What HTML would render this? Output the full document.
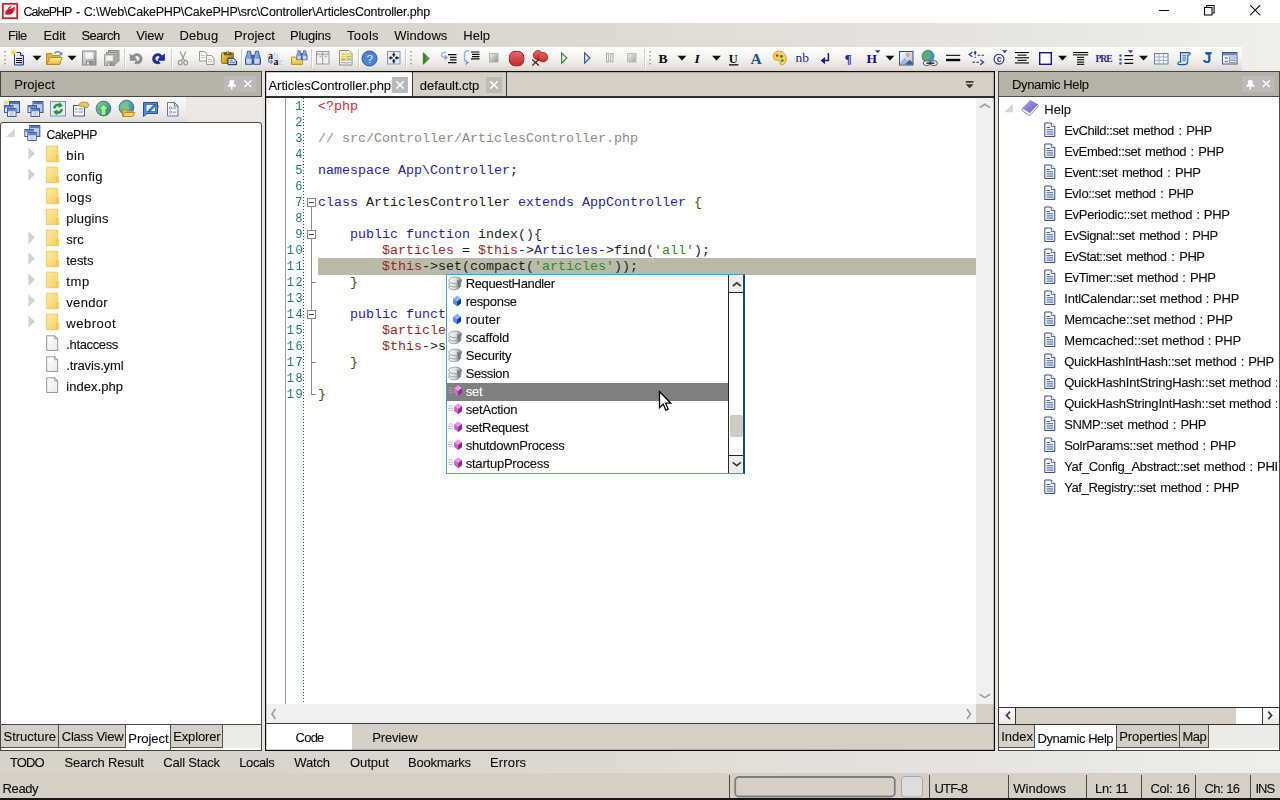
<!DOCTYPE html>
<html lang="en">
<head>
<meta charset="utf-8">
<title>CakePHP - C:\Web\CakePHP\CakePHP\src\Controller\ArticlesController.php</title>
<style>
*{box-sizing:border-box;margin:0;padding:0}
html,body{width:1280px;height:800px;overflow:hidden;background:#d4d0c8}
body{position:relative;font-family:"Liberation Sans",Arial,sans-serif;font-size:13px;color:#1c1c1c;line-height:16px}
.a,.t{position:absolute}
.t{white-space:nowrap;line-height:16px;height:16px;color:#0c0c0c;-webkit-text-stroke:.1px currentColor}
svg{position:absolute;overflow:visible;left:0;top:0}
/* window chrome */
#title{left:0;top:0;width:1280px;height:23px;background:#fff}
#menu{left:0;top:23px;width:1280px;height:24px;background:linear-gradient(90deg,#d5d2ca 0%,#dad7d1 40%,#e5e4e0 75%,#eeeeed 100%)}
#tools{left:0;top:47px;width:1280px;height:24px;background:linear-gradient(90deg,#d5d2ca 0%,#dad7d1 40%,#e5e4e0 75%,#eeeeed 100%)}
.tb{position:absolute;top:0;height:24px;background:linear-gradient(180deg,#fdfdfc 0%,#f4f3f1 45%,#e6e4e0 80%,#d9d6d0 100%)}
.sep{position:absolute;top:2px;width:2px;height:20px;background:linear-gradient(90deg,#c4c1ba 0,#c4c1ba 1px,#fff 1px,#fff 2px)}
/* panels */
.hdr{background:#b5b3a7;border:1px solid #46453f}
.pinbox{background:#babab8}
.ptb{background:#e9e8e5}
.ptbl{background:linear-gradient(180deg,#fafaf9 0%,#f0efed 50%,#e0deda 100%)}
.tree{background:#fff;border:1px solid #4a4944;overflow:hidden}
.ptabs{background:linear-gradient(180deg,#ebebea 0,#ebebea 23px,#fbfbfb 23px,#fbfbfb 100%);border:1px solid #46453f;border-top:none}
.ptab{top:0;height:23px;background:#d4d0c8;border-right:1px solid #55544f;border-bottom:1px solid #55544f}
.ptab.on{background:#fff;height:25px;border-bottom:none}
.rt{clip-path:none}
#txt{position:absolute;left:0;top:0;width:1277px;height:800px;overflow:hidden;will-change:transform}
/* editor */
.lnn{-webkit-text-stroke:0}
.code{font-family:"Liberation Mono","Courier New",monospace;font-size:13.33px;transform:scaleY(.9);transform-origin:0 11px;line-height:16px;white-space:pre;position:absolute;height:16px;left:318px;color:#1c1c1c}
.k{color:#2626a6}.v{color:#982828}.s{color:#2c8c2c}.c{color:#8c8c8c}.p{color:#c83232}.y{color:#4a4a10}
.fb{position:absolute;left:307px;width:9px;height:9px;border:1px solid #8a8a8a;background:#fff}
.fb:after{content:"";position:absolute;left:1px;top:3px;width:5px;height:1px;background:#444}
.ft{position:absolute;left:311px;width:5px;height:1px;background:#8a8a8a}
</style>
</head>
<body>
<!-- TITLE BAR -->
<div id="title" class="a"></div>
<!-- MENU BAR -->
<div id="menu" class="a"></div>
<!-- TOOLBARS -->
<div id="tools" class="a">
  <div class="tb" style="left:0;width:1242px"></div>
</div>
<div class="a" id="gapl" style="left:262px;top:72px;width:3px;height:679px;background:#e4e3df"></div>
<div class="a" id="gapr" style="left:995px;top:72px;width:3px;height:679px;background:#e4e3df"></div>
<!-- TOOLBAR ICONS -->
<svg width="1280" height="72" viewBox="0 0 1280 72">
<defs>
<linearGradient id="gy" x1="0" y1="0" x2="0" y2="1"><stop offset="0" stop-color="#fff0a8"/><stop offset="1" stop-color="#eeb630"/></linearGradient>
<linearGradient id="gb" x1="0" y1="0" x2="1" y2="1"><stop offset="0" stop-color="#ffffff"/><stop offset="1" stop-color="#a9bde6"/></linearGradient>
<linearGradient id="gg" x1="0" y1="0" x2="1" y2="1"><stop offset="0" stop-color="#f2f2f2"/><stop offset="1" stop-color="#8e8e8e"/></linearGradient>
<linearGradient id="gr" x1="0" y1="0" x2="0" y2="1"><stop offset="0" stop-color="#e26a6a"/><stop offset="1" stop-color="#c02a2a"/></linearGradient>
<linearGradient id="gbl" x1="0" y1="0" x2="1" y2="1"><stop offset="0" stop-color="#b8d0f4"/><stop offset="1" stop-color="#3c68b4"/></linearGradient>
<linearGradient id="ggr" x1="0" y1="0" x2="1" y2="0"><stop offset="0" stop-color="#2c6e1c"/><stop offset="1" stop-color="#6cb848"/></linearGradient>
<linearGradient id="gpa" x1="0" y1="0" x2="1" y2=".6"><stop offset="0" stop-color="#f6dc4c"/><stop offset=".45" stop-color="#e0b22c"/><stop offset="1" stop-color="#8c6a1e"/></linearGradient>
</defs>
<g fill="#80808e"><rect x="4.4" y="51.3" width="1.3" height="1.3"/><rect x="4.4" y="55.2" width="1.3" height="1.3"/><rect x="4.4" y="59.1" width="1.3" height="1.3"/><rect x="4.4" y="63" width="1.3" height="1.3"/></g>
<g fill="#80808e"><rect x="410.4" y="51.3" width="1.3" height="1.3"/><rect x="410.4" y="55.2" width="1.3" height="1.3"/><rect x="410.4" y="59.1" width="1.3" height="1.3"/><rect x="410.4" y="63" width="1.3" height="1.3"/></g>
<g fill="#80808e"><rect x="649.4" y="51.3" width="1.3" height="1.3"/><rect x="649.4" y="55.2" width="1.3" height="1.3"/><rect x="649.4" y="59.1" width="1.3" height="1.3"/><rect x="649.4" y="63" width="1.3" height="1.3"/></g>
<rect x="124" y="49" width="1" height="19" fill="#d0cec8"/><rect x="125" y="49" width="1" height="19" fill="#fdfdfd"/>
<rect x="171" y="49" width="1" height="19" fill="#d0cec8"/><rect x="172" y="49" width="1" height="19" fill="#fdfdfd"/>
<rect x="241" y="49" width="1" height="19" fill="#d0cec8"/><rect x="242" y="49" width="1" height="19" fill="#fdfdfd"/>
<rect x="311" y="49" width="1" height="19" fill="#d0cec8"/><rect x="312" y="49" width="1" height="19" fill="#fdfdfd"/>
<rect x="358" y="49" width="1" height="19" fill="#d0cec8"/><rect x="359" y="49" width="1" height="19" fill="#fdfdfd"/>
<rect x="405" y="49" width="1" height="19" fill="#d0cec8"/><rect x="406" y="49" width="1" height="19" fill="#fdfdfd"/>
<rect x="644" y="49" width="1" height="19" fill="#d0cec8"/><rect x="645" y="49" width="1" height="19" fill="#fdfdfd"/>
<path d="M32.5 55.8h9l-4.5 4.6z" fill="#0a0a0a"/>
<path d="M67.5 55.8h9l-4.5 4.6z" fill="#0a0a0a"/>
<path d="M677.5 55.8h9l-4.5 4.6z" fill="#0a0a0a"/>
<path d="M712 55.8h9l-4.5 4.6z" fill="#0a0a0a"/>
<path d="M885.5 55.8h9l-4.5 4.6z" fill="#0a0a0a"/>
<path d="M1058 55.8h9l-4.5 4.6z" fill="#0a0a0a"/>
<path d="M1139 55.8h9l-4.5 4.6z" fill="#0a0a0a"/>
<g><path d="M14.5 52.5h6l3 3v9.5h-9z" fill="url(#gb)" stroke="#2c3c7c"/><path d="M20.5 52.5v3h3" fill="#dfe8fa" stroke="#2c3c7c"/><path d="M16 58.5h6M16 60.5h6M16 62.5h6" stroke="#111" stroke-width="1.1"/><path d="M13.5 49.5v6M10.5 52.5h6M11.4 50.4l4.2 4.2M15.6 50.4l-4.2 4.2" stroke="#f2d84a" stroke-width="1.1"/></g>
<g><path d="M46.5 64.5v-11h5l1.5 2h7v9z" fill="#e3b43a" stroke="#b98e22"/><path d="M46.8 64.5l3-7h12.4l-2.7 7z" fill="url(#gy)" stroke="#b98e22"/><path d="M54.5 53.5c2-2.6 5.4-2.6 6.6 0.6" fill="none" stroke="#5c84c6" stroke-width="1.4"/><path d="M62.6 52l-0.6 3.6-3.2-1.4z" fill="#5c84c6"/></g>
<g transform="translate(82 50.5) scale(1)"><rect x=".5" y=".5" width="13.5" height="14" fill="url(#gg)" stroke="#8a8a8a"/><rect x="2.5" y="1.5" width="9" height="7" fill="#f4f4f4" stroke="#b4b4b4" stroke-width=".6"/><rect x="4" y="10.5" width="6.5" height="4" fill="#8c8c8c"/><rect x="5" y="11.5" width="2" height="2.5" fill="#e6e6e6"/></g>
<g><rect x="108.5" y="50.5" width="10.5" height="10.5" fill="#b4b4b4" stroke="#8e8e8e"/><rect x="106.5" y="52.5" width="10.5" height="10.5" fill="#c0c0c0" stroke="#8e8e8e"/></g>
<g transform="translate(104 54.3) scale(0.78)"><rect x=".5" y=".5" width="13.5" height="14" fill="url(#gg)" stroke="#8a8a8a"/><rect x="2.5" y="1.5" width="9" height="7" fill="#f4f4f4" stroke="#b4b4b4" stroke-width=".6"/><rect x="4" y="10.5" width="6.5" height="4" fill="#8c8c8c"/><rect x="5" y="11.5" width="2" height="2.5" fill="#e6e6e6"/></g>
<path d="M132.5 55.6A5.5 5.5 0 1 1 134.2 63.5L135.9 60.8A2.4 2.4 0 1 0 135 57.2L136.8 59V60.7H129.8V53.5Z" fill="#8e8e8e"/>
<path d="M132.5 55.6A5.5 5.5 0 1 1 134.2 63.5L135.9 60.8A2.4 2.4 0 1 0 135 57.2L136.8 59V60.7H129.8V53.5Z" fill="#1d2f9e" transform="translate(294.7 0) scale(-1 1)"/>
<g fill="none" stroke="#9a9a9a" stroke-width="1.2"><path d="M180 51.5l4.6 9.5M186 51.5l-4.6 9.5"/><ellipse cx="180.3" cy="62.6" rx="1.9" ry="2.3"/><ellipse cx="185.7" cy="62.6" rx="1.9" ry="2.3"/></g>
<g stroke="#9a9a9a" fill="#f6f6f6"><path d="M199.5 51.5h5l2.5 2.5v7h-7.5z"/><path d="M206.5 55.5h5l2.5 2.5v6.5h-7.5z"/><path d="M201 55.5h4M201 57.5h4M208 59.5h4M208 61.5h4" stroke="#bcbcbc" stroke-width=".8"/></g>
<g><rect x="221.5" y="52.7" width="12" height="10.8" rx="1" fill="url(#gpa)" stroke="#8a6a1c" stroke-width=".9"/><path d="M224.200 54.800v-1.800h1.600c0.300-1.700 3.500-1.700 3.800 0h1.600v1.800z" fill="#6e5628" stroke="#4e3c1c" stroke-width=".6"/><circle cx="227.700" cy="52.900" r=".8" fill="#f4e8b0"/><path d="M228 58.300h5.600l3 2.700v3.700h-8.600z" fill="url(#gb)" stroke="#1c2448" stroke-width="1"/><path d="M229.500 60.300h3M229.500 62.300h5.500" stroke="#4c68b0" stroke-width=".9"/></g>
<g transform="translate(245 50.8) scale(1)"><path d="M2.5 0.5h3l0.6 3.5 1.4 3.5v6h-7v-6l1.4-3.5z" fill="url(#gbl)" stroke="#2c4c94" stroke-width=".9"/><path d="M10.5 0.5h3l0.6 3.5 1.4 3.5v6h-7v-6l1.4-3.5z" fill="url(#gbl)" stroke="#2c4c94" stroke-width=".9"/><rect x="1.5" y="8" width="5" height="5" fill="#e4eefc" opacity=".75"/><rect x="9.5" y="8" width="5" height="5" fill="#e4eefc" opacity=".75"/><rect x="6.6" y="4" width="2.8" height="3" fill="#3a5aa4"/></g>
<g font-family="'Liberation Serif',serif" font-weight="bold" font-size="10px"><text x="268" y="58.5" fill="#0a0a0a">a</text><text x="273.3" y="58.5" fill="#c0c4cc" font-weight="normal">b</text><text x="273.6" y="65" fill="#0a0a0a">a</text><text x="279" y="65" fill="#b8c4dc" font-weight="normal">c</text></g><path d="M268.6 58.6v3.2h3M270.6 59.8l2 2-2 2" fill="none" stroke="#6a8ed2" stroke-width="1.3"/>
<g><path d="M291.5 64.5v-7.5h3.5l1 1.4h6.5v6.1z" fill="url(#gy)" stroke="#c29420"/></g>
<g transform="translate(296.3 50.3) scale(0.7)"><path d="M2.5 0.5h3l0.6 3.5 1.4 3.5v6h-7v-6l1.4-3.5z" fill="url(#gbl)" stroke="#2c4c94" stroke-width=".9"/><path d="M10.5 0.5h3l0.6 3.5 1.4 3.5v6h-7v-6l1.4-3.5z" fill="url(#gbl)" stroke="#2c4c94" stroke-width=".9"/><rect x="1.5" y="8" width="5" height="5" fill="#e4eefc" opacity=".75"/><rect x="9.5" y="8" width="5" height="5" fill="#e4eefc" opacity=".75"/><rect x="6.6" y="4" width="2.8" height="3" fill="#3a5aa4"/></g>
<g fill="#f2f2f2" stroke="#9a9a9a"><rect x="316.5" y="51.5" width="12.5" height="12.5"/><path d="M322.7 52v12M317 54.2h12" /><path d="M319.5 56.5h2M325 56.5h2" stroke="#b0b0b0" stroke-width="1.6"/></g>
<g><path d="M339.5 50.5h9.5l3 3v11.5h-12.5z" fill="#fafafa" stroke="#8a8a8a"/><rect x="341" y="53" width="4.4" height="1.8" fill="#f0d23c"/><rect x="346.4" y="53" width="4.4" height="1.8" fill="#f0d23c"/><rect x="346.4" y="55.6" width="4.4" height="1.8" fill="#9cc860"/><rect x="341" y="55.6" width="4.4" height="1.8" fill="#f0d23c"/><rect x="341" y="58.2" width="4.4" height="2.6" fill="#eeb01c"/><rect x="346.4" y="58.2" width="4.4" height="2.6" fill="#a4cc6c"/><rect x="341" y="62" width="9.8" height="1.4" fill="#b4b4b4"/><path d="M346 51v13.5" stroke="#c8c8c8" stroke-width=".8"/></g>
<g><circle cx="369.5" cy="58.5" r="7.5" fill="#4b85d6" stroke="#2c569e"/><text x="369.6" y="62.6" text-anchor="middle" font-family="'Liberation Sans',sans-serif" font-size="11.5px" fill="#e8f0fc">?</text></g>
<g><rect x="387.5" y="51.5" width="12.5" height="12.5" fill="#e4eefb" stroke="#8a9ab4"/><path d="M393.8 52.6v4.2M393.8 59v4.2M388.8 57.9h3.9M395 57.9h3.9" stroke="#0a0a0a" stroke-width="1.2"/><path d="M392.2 54.8h3.2M392.2 61h3.2M390.8 56.3v3.2M396.8 56.3v3.2" stroke="#0a0a0a" stroke-width="1"/></g>
<path d="M423.3 52.8l6 5.7-6 5.7z" fill="url(#ggr)" stroke="#2a641c" stroke-width=".7"/>
<g><path d="M448 54.600h8.500M450 57.300h6.500M450 59.900h6.500M448 62.600h8.500" stroke="#0a0a0a" stroke-width="1.200"/><path d="M446 52.6c-3.4-0.8-5 1.2-4.4 3.2 0.4 1.2 1.6 1.6 3 1.6" fill="none" stroke="#8ab0e4" stroke-width="1.3"/><path d="M444.6 54.6l3.4 3-3.4 3z" fill="#7aa4e0"/></g>
<g><path d="M471 52h8.5M472 54.3h7.5M472 56.6h7.5M471 58.9h8.5" stroke="#0a0a0a" stroke-width="1.2"/><path d="M469.5 50.6c-4-0.4-5 1.4-5 4v7" fill="none" stroke="#8ab0e4" stroke-width="1.3"/><path d="M465.6 59.4l3.4 3-3.4 3z" fill="#7aa4e0"/></g>
<rect x="489.5" y="53.5" width="8.5" height="8.5" fill="url(#gg)" stroke="#b0b0b0"/>
<rect x="509.400" y="51.400" width="14.400" height="14.400" rx="5.600" fill="url(#gr)" stroke="#a62020" stroke-width="1"/>
<g><circle cx="538" cy="55.2" r="4.7" fill="url(#gr)" stroke="#aa2222" stroke-width=".8"/><circle cx="543" cy="57.2" r="4.8" fill="url(#gr)" stroke="#aa2222" stroke-width=".8"/><path d="M532.3 59.5l6.6 6M538.9 59.5l-6.6 6" stroke="#6e1010" stroke-width="1.3"/></g>
<path d="M561.6 52.8l5.3 5.2-5.3 5.2z" fill="#eef6ea" stroke="#3a7e2c" stroke-width="1.1"/>
<path d="M584.6 52.8l5.3 5.2-5.3 5.2z" fill="#eaf0fb" stroke="#2c52b0" stroke-width="1.1"/>
<g fill="#f0f0f0" stroke="#a4a4a4" stroke-width=".9"><rect x="606.5" y="53.5" width="2.2" height="8.5"/><rect x="610.8" y="53.5" width="2.2" height="8.5"/></g>
<rect x="627.5" y="53.5" width="8.5" height="8.5" fill="url(#gg)" stroke="#b0b0b0" opacity=".8"/>
<g font-family="'Liberation Serif',serif" font-weight="bold">
<text x="658.6" y="63.2" font-size="13.5px" fill="#0a0a0a">B</text>
<text x="694.4" y="63.2" font-size="13.5px" font-style="italic" fill="#0a0a0a">I</text>
<text x="728.8" y="63" font-size="12.5px" fill="#0a0a0a">U</text>
<text x="750.6" y="64" font-size="15.5px" fill="#1c4e8c">A</text>
<text x="795.4" y="62.300" font-size="13.5px" font-weight="normal" fill="#1c2a8c" letter-spacing=".2">nb</text>
<text x="844.6" y="62.6" font-size="13.5px" fill="#1c2a9c">¶</text>
<text x="866.4" y="63" font-size="13.5px" fill="#10108c">H</text>
<text x="1095.500" y="62.300" font-size="9.500px" fill="#26268c" letter-spacing="-1">PRE</text>
</g>
<rect x="729" y="64.2" width="9.4" height="1.3" fill="#0a0a0a"/>
<path d="M875 50.2h5.4l-2.7 3z" fill="#2c3cb0"/>
<g><path d="M776.5 51.6c4-1.4 8 0.6 9.4 4.6 1.2 3.6-0.6 8-3.4 8.6-2.2 0.4-2.8-1.4-2.4-3 0.3-1.3-0.8-2-2.3-1.6-2 0.5-3.9-0.4-4.5-2.7-0.6-2.5 0.8-5 3.2-5.9z" fill="#f6d45a" stroke="#c89a22" stroke-width=".9"/><circle cx="777.2" cy="55.6" r="1.4" fill="#d03a2a"/><circle cx="781.4" cy="56.4" r="1.4" fill="#2c58c0"/><circle cx="782.2" cy="60.6" r="1.4" fill="#3a9a2a"/></g>
<g><path d="M828.4 53v7.6h-4.4" fill="none" stroke="#141c8c" stroke-width="1.5"/><path d="M820.6 60.6l4.4-3.6v7.2z" fill="#141c8c"/></g>
<g><rect x="899.5" y="51.5" width="13.5" height="13.5" fill="url(#gb)" stroke="#3a4e7c"/><path d="M900 64.5l4.6-6.2 3 3.4 2-2 3.4 3.4v1.4z" fill="#4a5e8c"/><path d="M900 64.5l4.6-6.2 3 3.4-2.6 2.8z" fill="#a4b6d8"/><circle cx="907.8" cy="54.8" r="1.6" fill="#f4c070" stroke="#d08a30" stroke-width=".8"/></g>
<g><circle cx="928" cy="56.3" r="6" fill="#4c8ed0" stroke="#3a7a6a" stroke-width=".8"/><path d="M923 54c1.6-3 4.4-4 7-3.2-1 1.8-1 3.6 0.4 4.4 1 2-1.8 3.6-3.6 5.8-2.6-0.8-4.6-3.8-3.800-7z" fill="#5cb06c"/><rect x="923.3" y="60.8" width="7" height="4.6" rx="2.3" fill="#f4f6fa" stroke="#3a4a5c" stroke-width=".9"/><rect x="930.3" y="60.8" width="7" height="4.6" rx="2.3" fill="#f4f6fa" stroke="#3a4a5c" stroke-width=".9"/><rect x="926.4" y="62.4" width="8" height="1.5" fill="#1c2c3c"/></g>
<rect x="946" y="54.8" width="14.2" height="1.1" fill="#0a0a0a"/><rect x="946" y="58.8" width="14.2" height="2.4" fill="#0a0a0a"/>
<g fill="none" stroke="#1c2c9c" stroke-width="1.1"><path d="M972.4 52.2l-3.4 2.3 3.400 2.300"/><path d="M975.2 51.6v3.600"/><path d="M977.6 55.200h2.600M981.600 55.200h2.400" /><path d="M972.4 62.200h2.600M976.400 62.200h2.600"/><path d="M980.200 59.700l3.400 2.500-3.400 2.500"/></g><circle cx="975.2" cy="52.400" r="1.200" fill="#1c2c9c"/><rect x="974.600" y="56.700" width="1.200" height="1.200" fill="#1c2c9c"/>
<g><circle cx="999" cy="59.2" r="4.9" fill="#f4f6fc" stroke="#1c2c9c" stroke-width="1.1"/><text x="999.1" y="62.2" text-anchor="middle" font-family="'Liberation Sans',sans-serif" font-size="8.5px" font-weight="bold" fill="#1c2c9c">c</text><path d="M1002 50.200h5.4l-2.700 3z" fill="#2c3cb0"/></g>
<g fill="#0a0a0a"><rect x="1015" y="52" width="14" height="1.1"/><rect x="1017.5" y="54.6" width="9" height="1.1"/><rect x="1015" y="57.2" width="14" height="1.1"/><rect x="1017.5" y="59.800" width="9" height="1.1"/><rect x="1015" y="62.400" width="14" height="1.1"/></g>
<rect x="1039.700" y="52.700" width="11.600" height="11.600" fill="#fafafa" stroke="#16167c" stroke-width="1.4"/>
<g fill="#0a0a0a"><rect x="1073" y="52" width="15.200" height="1.100"/><rect x="1073" y="54.300" width="15.200" height="1.100"/><rect x="1077" y="56.800" width="7.200" height="1.100"/><rect x="1077" y="59.200" width="7.200" height="1.100"/><rect x="1077" y="61.600" width="7.200" height="1.100"/><rect x="1077" y="63.800" width="7.200" height="1.100"/></g>
<g><path d="M1124.400 55.600h8.800M1124.400 59.500h8.800M1124.400 63.400h8.800" stroke="#0a0a0a" stroke-width="1.1"/><circle cx="1120.500" cy="55.600" r="1.300" fill="#4a5ab4"/><circle cx="1120.500" cy="59.500" r="1.300" fill="#4a5ab4"/><circle cx="1120.500" cy="63.400" r="1.300" fill="#4a5ab4"/><path d="M1127.800 50.200h5.400l-2.700 3z" fill="#2c3cb0"/></g>
<g><rect x="1154.500" y="53.500" width="13.500" height="10.500" fill="#f2f5fa" stroke="#6a7e9c"/><path d="M1159 53.500v10.500M1163.500 53.500v10.500M1154.500 57h13.500M1154.500 60.500h13.500" stroke="#9aaac4" stroke-width=".9"/></g>
<g><path d="M1180.500 52.600h8.600c1.600 0 1.600 2.400 0 2.400h-1.300v6.600c0 3-2 3-3 3h-5.600c-1.800 0-1.800-2.600 0-2.600h1.300z" fill="#cfe2fb" stroke="#1c56ac" stroke-width="1.100"/><path d="M1182.400 55.800h3.600M1182.400 58h3.600M1182.400 60.200h3.600" stroke="#1c56ac" stroke-width=".9"/></g>
<text x="1202.800" y="63.200" font-family="'Liberation Sans',sans-serif" font-weight="bold" font-size="15.500px" fill="#1a56a6">J</text><rect x="1205.200" y="52.100" width="6.600" height="1.800" fill="#1a56a6"/>
<g><rect x="1222.500" y="52.500" width="14.500" height="11.500" fill="#f0f4fb" stroke="#46568c"/><rect x="1223" y="53" width="13.500" height="2.400" fill="#6a86cc"/><path d="M1224.800 58h3M1224.800 61.400h3" stroke="#46568c" stroke-width="1"/><rect x="1229.500" y="57" width="5.500" height="2" fill="#fff" stroke="#6a7a9c" stroke-width=".7"/><rect x="1229.500" y="60.400" width="5.500" height="2" fill="#fff" stroke="#6a7a9c" stroke-width=".7"/></g>
</svg>
<!-- LEFT PANEL -->
<div id="left" class="a" style="left:0;top:71px;width:262px;height:680px">
  <div class="a hdr" style="left:0;top:0;width:262px;height:26px">
    <div class="a pinbox" style="left:223px;top:4px;width:32px;height:16px"></div>
  </div>
  <div class="a ptb" style="left:0;top:26px;width:262px;height:25px"><div class="a ptbl" style="left:0;top:0;width:186px;height:25px"></div></div>
  <div class="a tree" style="left:0;top:51px;width:262px;height:603px;border-radius:3px 3px 0 0"></div>
  <div class="a ptabs" style="left:0;top:654px;width:262px;height:26px">
    <div class="a ptab" style="left:0;width:58px"></div>
    <div class="a ptab" style="left:58px;width:67px"></div>
    <div class="a ptab on" style="left:125px;width:45px"></div>
    <div class="a ptab" style="left:170px;width:52px"></div>
  </div>
</div>
<!-- EDITOR -->
<div id="editor" class="a" style="left:265px;top:71px;width:730px;height:680px;background:#d4d0c8">
 <!-- file tabs -->
 <div class="a" style="left:1px;top:1px;width:146px;height:25px;background:#fff"></div>
 <div class="a" style="left:147px;top:1px;width:1px;height:25px;background:#3a3a38"></div>
 <div class="a" style="left:241px;top:1px;width:1px;height:25px;background:#3a3a38"></div>
 <div class="a" style="left:127px;top:6px;width:16px;height:16px;background:#b9b9b9"></div>
 <div class="a" style="left:221px;top:6px;width:16px;height:16px;background:#bdbbb6"></div>
 <!-- code area -->
 <div class="a" style="left:1px;top:26px;width:710px;height:608px;background:#fff"></div>
 <div class="a" style="left:21px;top:26px;width:18px;height:608px;background:#fdfefe"></div>
 <div class="a" style="left:20px;top:26px;width:1px;height:608px;background:#9c9c9c"></div>
 <div class="a" style="left:38px;top:27px;width:1px;height:606px;background:repeating-linear-gradient(180deg,#3a4a4a 0,#3a4a4a 1.2px,transparent 1.2px,transparent 3px)"></div>
 <div class="a" style="left:53px;top:187px;width:658px;height:16.8px;background:#b9bba8"></div>
 <div class="a" style="left:46px;top:136px;width:1px;height:188px;background:#8a8a8a"></div>
 <div class="fb" style="left:42px;top:127px"></div>
 <div class="fb" style="left:42px;top:159px"></div>
 <div class="fb" style="left:42px;top:239px"></div>
 <div class="ft" style="left:46px;top:211px"></div>
 <div class="ft" style="left:46px;top:291px"></div>
 <div class="ft" style="left:46px;top:323px"></div>
 <div class="code" style="left:53px;top:28px"><span class="p">&lt;?php</span></div>
 <div class="code" style="left:53px;top:60px"><span class="c">// src/Controller/ArticlesController.php</span></div>
 <div class="code" style="left:53px;top:92px"><span class="k">namespace App</span>\<span class="k">Controller</span>;</div>
 <div class="code" style="left:53px;top:124px"><span class="k">class</span> ArticlesController <span class="k">extends AppController</span> <span class="y">{</span></div>
 <div class="code" style="left:53px;top:156px">    <span class="k">public function</span> index(){</div>
 <div class="code" style="left:53px;top:172px">        <span class="v">$articles</span> = <span class="v">$this</span>-&gt;<span class="k">Articles</span>-&gt;find(<span class="s">'all'</span>);</div>
 <div class="code" style="left:53px;top:188px">        <span class="v">$this</span>-&gt;set(compact(<span class="s">'articles'</span>));</div>
 <div class="code" style="left:53px;top:204px">    <span class="y">}</span></div>
 <div class="code" style="left:53px;top:236px">    <span class="k">public funct</span></div>
 <div class="code" style="left:53px;top:252px">        <span class="v">$article</span></div>
 <div class="code" style="left:53px;top:268px">        <span class="v">$this</span>-&gt;s</div>
 <div class="code" style="left:53px;top:284px">    <span class="y">}</span></div>
 <div class="code" style="left:53px;top:316px"><span class="y">}</span></div>
 <!-- scrollbars -->
 <div class="a" style="left:711px;top:26px;width:18px;height:608px;background:#f0f0f0"></div>
 <div class="a" style="left:1px;top:633px;width:710px;height:19px;background:#f0f0f0"></div>
 <div class="a" style="left:711px;top:633px;width:18px;height:19px;background:#d4d0c8"></div>
 <!-- view tabs -->
 <div class="a" style="left:1px;top:653px;width:86px;height:26px;background:#fff"></div>
 <!-- frame -->
 <div class="a" style="left:0px;top:25px;width:730px;height:1.5px;background:#2e2e2c"></div>
 <div class="a" style="left:0px;top:652px;width:730px;height:1px;background:#3a3a38"></div>
 <div class="a" style="left:0;top:0;width:730px;height:680px;border:1px solid #0c0c0c;box-shadow:inset 0 0 0 .5px rgba(0,0,0,.35)"></div>
 <!-- autocomplete popup -->
 <div class="a" style="left:181px;top:203px;width:299px;height:200px;background:#fff;border:1px solid #4f9fcb;border-right:2px solid #1a4877">
  <div class="a" style="left:0;top:108px;width:281px;height:18px;background:#808080"></div>
  <div class="a" style="left:281px;top:0;width:15px;height:198px;background:#fff;border-left:1px solid #2a2a2a"></div>
  <div class="a" style="left:282px;top:0;width:14px;height:18px;background:#ededed;border-bottom:1px solid #2a2a2a"></div>
  <div class="a" style="left:282px;top:180px;width:14px;height:18px;background:#ededed;border-top:1px solid #2a2a2a"></div>
  <div class="a" style="left:283px;top:140px;width:13px;height:22px;background:#cdcac3;border-radius:2px"></div>
 </div>
</div>
<!-- RIGHT PANEL -->
<div id="right" class="a" style="left:998px;top:71px;width:282px;height:680px">
  <div class="a hdr" style="left:0;top:0;width:282px;height:26px">
    <div class="a pinbox" style="left:243px;top:4px;width:32px;height:16px"></div>
  </div>
  <div class="a tree" style="left:0;top:25px;width:282px;height:612px"></div>
  <div class="a" style="left:0;top:636px;width:282px;height:17.500px;background:#d4d0c8;border:1px solid #2e2e2c">
    <div class="a" style="left:0;top:0;width:17px;height:16px;background:linear-gradient(180deg,#fff,#e9e9e9);border-right:1px solid #3a3a38"></div>
    <div class="a" style="left:237px;top:0;width:26px;height:16px;background:#fff"></div>
    <div class="a" style="left:263px;top:0;width:17px;height:16px;background:linear-gradient(180deg,#fff,#e9e9e9);border-left:1px solid #3a3a38"></div>
  </div>
  <div class="a ptabs" style="left:0;top:654px;width:282px;height:26px">
    <div class="a ptab" style="left:0;width:36px"></div>
    <div class="a ptab on" style="left:36px;width:82px"></div>
    <div class="a ptab" style="left:118px;width:63px"></div>
    <div class="a ptab" style="left:181px;width:29px"></div>
  </div>
</div>
<!-- BOTTOM TABS -->
<div id="btabs" class="a" style="left:0;top:751px;width:1280px;height:22px;background:linear-gradient(90deg,#d5d2ca 0%,#dad7d1 40%,#e5e4e0 75%,#eeeeed 100%)"></div>
<!-- STATUS BAR -->
<div id="status" class="a" style="left:0;top:773px;width:1280px;height:25px;background:#d4d0c8"></div>
<div class="a" style="left:0;top:798px;width:1280px;height:2px;background:#161616"></div>
<!-- ICON OVERLAY -->
<svg width="1280" height="800" viewBox="0 0 1280 800">
<defs>
<linearGradient id="fy" x1="0" y1="0" x2="1" y2="1"><stop offset="0" stop-color="#fdeaa0"/><stop offset="1" stop-color="#f7cf5c"/></linearGradient>
<linearGradient id="fd" x1="0" y1="0" x2="1" y2="1"><stop offset="0" stop-color="#ffffff"/><stop offset="1" stop-color="#e9e9ec"/></linearGradient>
<linearGradient id="db" x1="0" y1="0" x2="1" y2="0"><stop offset="0" stop-color="#f4f5f6"/><stop offset=".55" stop-color="#dfe2e4"/><stop offset="1" stop-color="#7c848c"/></linearGradient>
<linearGradient id="pk" x1="0" y1="0" x2="0" y2="1"><stop offset="0" stop-color="#f0a0f0"/><stop offset="1" stop-color="#a030a8"/></linearGradient>
<linearGradient id="bk" x1="0" y1="0" x2="1" y2="1"><stop offset="0" stop-color="#a8a0ec"/><stop offset="1" stop-color="#6c62c4"/></linearGradient>
<linearGradient id="wn" x1="0" y1="0" x2="1" y2="1"><stop offset="0" stop-color="#eaf1fc"/><stop offset="1" stop-color="#9cb6e4"/></linearGradient><linearGradient id="dc" x1="0" y1="0" x2="1" y2="1"><stop offset="0" stop-color="#ffffff"/><stop offset=".6" stop-color="#f2f6fc"/><stop offset="1" stop-color="#c4d4ee"/></linearGradient>
<linearGradient id="gl" x1="0" y1="0" x2="1" y2="1"><stop offset="0" stop-color="#7cc4a0"/><stop offset="1" stop-color="#3a74c4"/></linearGradient>
<g id="folder"><path d="M.5 .5h11.300v9.300h1v6.200h-12.300z" fill="url(#fy)" stroke="#ecc455" stroke-width=".8"/><path d="M10.400 15.800v-5.500h1.800" fill="none" stroke="#e6bc48" stroke-width=".8"/></g>
<g id="file"><path d="M.5 .5h8l3 3v11.700h-11z" fill="url(#fd)" stroke="#8c8c8c" stroke-width=".9" stroke-linejoin="miter"/><path d="M8.500 .5v3h3" fill="none" stroke="#8c8c8c" stroke-width=".8"/></g>
<g id="doc"><path d="M.5 .5h6.500l3.500 3.500v10h-10z" fill="url(#dc)" stroke="#2c3c60" stroke-width=".9"/><path d="M7 .5v3.500h3.500" fill="#fff" stroke="#32466c" stroke-width=".8"/><path d="M2.300 5h3.500M2.300 7.200h6.400M2.300 9.400h6.400M2.300 11.600h6.400" stroke="#3c64b0" stroke-width="1"/></g>
<g id="dbi"><ellipse cx="6" cy="10.800" rx="5.500" ry="2.700" fill="url(#db)" stroke="#8a9298" stroke-width=".8"/><ellipse cx="6" cy="8" rx="5.500" ry="2.700" fill="url(#db)" stroke="#8a9298" stroke-width=".8"/><ellipse cx="7" cy="4.200" rx="6.500" ry="3.300" fill="url(#db)" stroke="#8a9298" stroke-width=".8"/><path d="M8.500 4h4.500v6.500l-3 1z" fill="#6c747c" opacity=".8"/></g>
<g id="cubeb"><path d="M4.300 0l4.200 3.300v5l-4.200 3.400-4.300-3.400v-5z" fill="#8cb4ec"/><path d="M0 3.300l4.300 3 4.200-3v5l-4.200 3.400-4.300-3.400z" fill="#5c8cd8"/><path d="M4.300 6.300l4.200-3v5l-4.200 3.400z" fill="#123c9c"/></g>
<g id="cubep"><path d="M4.300 0l4.200 3.300v5l-4.200 3.400-4.300-3.400v-5z" fill="#ec98ec"/><path d="M0 3.300l4.300 3 4.200-3v5l-4.200 3.400-4.300-3.400z" fill="#c866cc"/><path d="M4.300 6.300l4.200-3v5l-4.200 3.400z" fill="#8c2c94"/><path d="M-6 3h4.500M-6.500 5.500h5M-6 8h4.500" stroke="#a8a8a8" stroke-width=".9"/></g>
<g id="win"><rect x="5.500" y=".5" width="10" height="11" fill="url(#wn)" stroke="#3a5288"/><rect x="6" y="1" width="9" height="2.200" fill="#4c78cc"/><rect x=".5" y="4.500" width="8.500" height="7" fill="#dce8fa" stroke="#3a5288" stroke-width=".9"/><rect x="1" y="5" width="7.500" height="1.800" fill="#5a84d4"/><rect x="3.500" y="7.500" width="8.500" height="8" fill="#f4f8fe" stroke="#3a5288" stroke-width=".9"/><rect x="4" y="8" width="7.500" height="2.400" fill="#5a84d4"/><path d="M5.300 12h5M5.300 14h5" stroke="#8ca4d0" stroke-width=".9"/></g>
</defs>
<g><rect x="2.800" y="3.800" width="14.400" height="14.400" fill="#fdf3f3" stroke="#c4202c" stroke-width="1.800"/><path d="M5.200 13.200c0-2.600 2.400-4.200 5-4.400 1.500-0.100 3.200-1 4.300-2.500 0.600 3-0.300 5.800-2.600 7.400-2.400 1.600-6.700 1.600-6.700-0.500z" fill="#cc1c28"/><path d="M7.400 9.200c0.800-1.600 2.200-2.800 4-3.200l0.400 0.900c-1.200 0.500-2.300 1.400-3.100 2.600z" fill="#a82c34"/></g>
<g fill="none" stroke="#111" stroke-width="1.100"><path d="M1159 10.500h10"/><rect x="1204.500" y="7.500" width="7.500" height="7.500"/><path d="M1206.600 7.500v-2h7.500v7.500h-2"/><path d="M1250.200 5.200l10 10M1260.200 5.200l-10 10"/></g>
<g><path d="M229.5 80.300h4.600v3.800l1.700 1.700v1h-8v-1l1.700-1.700z" fill="#fff"/><rect x="231.1" y="86.500" width="1.400" height="3" fill="#fff"/><path d="M244.3 80.500l7 6.600M251.3 80.500l-7 6.600" stroke="#fff" stroke-width="1.400"/></g>
<g><path d="M1248 80.300h4.600v3.800l1.700 1.700v1h-8v-1l1.700-1.700z" fill="#fff"/><rect x="1249.6" y="86.500" width="1.400" height="3" fill="#fff"/><path d="M1262.8 80.500l7 6.600M1269.8 80.500l-7 6.600" stroke="#fff" stroke-width="1.400"/></g>
<path d="M396.3 81.200l7.400 7.400M403.7 81.200l-7.400 7.400" stroke="#fff" stroke-width="1.500"/>
<path d="M490.3 81.200l7.400 7.400M497.7 81.200l-7.400 7.400" stroke="#fff" stroke-width="1.500"/>
<path d="M965.800 81h7.600v1.700h-7.600zM965.600 84.200h8l-4 4z" fill="#3a3632"/>
<g fill="none" stroke="#a29cac" stroke-width="1.700"><path d="M979.600 107.600l5.200-3.400 5.200 3.400"/><path d="M979.600 694.200l5.200 3.400 5.200-3.400"/><path d="M275.400 709l-3.400 5 3.400 5"/><path d="M967 709l3.400 5-3.400 5"/></g>
<g fill="none" stroke="#3c3c3c" stroke-width="1.700"><path d="M732.800 286l4-3.200 4 3.200"/><path d="M732.800 462.400l4 3.200 4-3.200"/></g>
<g fill="none" stroke="#3c3c3c" stroke-width="1.700"><path d="M1010 711.600l-3.400 3.800 3.400 3.800"/><path d="M1268.200 711.600l3.400 3.800-3.400 3.800"/></g>
<use href="#win" x="4" y="101"/><path d="M6 99.800v5.400M3.300 102.500h5.400M4.100 100.600l3.800 3.800M7.900 100.600l-3.800 3.800" stroke="#f0dc50" stroke-width="1"/>
<use href="#win" x="27.500" y="101"/>
<g><rect x="50.500" y="101.500" width="15" height="14.500" fill="#dcecfc" stroke="#7c90c8"/><path d="M53.500 108c0.200-3 3-4.600 5.600-3.800l0.300-1.700 3 3.300-3.800 1.500 0.200-1.400c-1.600-0.400-3.200 0.500-3.500 2.300z" fill="#1c9c2c" stroke="#127a1c" stroke-width=".5"/><path d="M62.500 109.500c-0.200 3-3 4.600-5.600 3.800l-0.300 1.700-3-3.300 3.800-1.500-0.200 1.400c1.600 0.400 3.200-0.500 3.500-2.300z" fill="#1c9c2c" stroke="#127a1c" stroke-width=".5"/></g>
<g><rect x="73.500" y="105.500" width="11" height="10.500" fill="#f4f8fe" stroke="#4c5c84"/><path d="M75.200 109h2M78.500 109h4.500M75.200 112h2M78.500 112h4.500" stroke="#6c88c0" stroke-width="1.100"/><path d="M77.500 105.500l4.500-3.500 5.500 0.500 1.500 2.500-2 3-4.500-1.500z" fill="#e8c860" stroke="#a8842c" stroke-width=".8"/></g>
<circle cx="103.5" cy="108.5" r="7.400" fill="url(#gl)" stroke="#3a6a8c" stroke-width=".8"/><path d="M98 107.5c1.500-3.500 5-5 8-4-1 2-1 4 0.500 5 1 2-2 4-4 6.500-3-1-5-4-4.500-7.500z" fill="#74c48c" opacity=".9"/>
<path d="M103.500 104l5.300 5.300h-2.800v6h-5v-6h-2.800z" fill="#a4f08c" stroke="#2c8c24" stroke-width=".9"/>
<circle cx="126.5" cy="107.5" r="7.400" fill="url(#gl)" stroke="#3a6a8c" stroke-width=".8"/><path d="M121 106.5c1.500-3.500 5-5 8-4-1 2-1 4 0.500 5 1 2-2 4-4 6.500-3-1-5-4-4.500-7.500z" fill="#74c48c" opacity=".9"/>
<path d="M122.500 116.500v-7h3.500l1.200 1.500h5.500v5.500z" fill="#f4b43c" stroke="#b8801c" stroke-width=".8"/><path d="M122.800 116.500l2.200-4h10l-2.300 4z" fill="#fcd060" stroke="#b8801c" stroke-width=".8"/>
<g><path d="M143.500 102.500h14v11h-10.500l-3.500 3z" fill="#4c90dc" stroke="#1c3c8c" stroke-width=".9"/><rect x="146" y="104.500" width="9.500" height="7" fill="#e4f4fc" stroke="#2c6cbc" stroke-width=".8"/><path d="M149 109.800l5.500-5.800 1.500 1.500-5.500 5.500-2 0.500z" fill="#3c8cd4" stroke="#16346c" stroke-width=".6"/><circle cx="158" cy="106.500" r=".9" fill="#d04030"/></g>
<g><path d="M167.500 102.500h7l3.500 3.500v10h-10.500z" fill="url(#fd)" stroke="#5a6a8a" stroke-width=".9"/><path d="M174.500 102.500v3.500h3.500" fill="none" stroke="#5a6a8a" stroke-width=".9"/><circle cx="170.600" cy="108" r="1.200" fill="none" stroke="#7a8aa8" stroke-width=".8"/><circle cx="170.600" cy="112.200" r="1.200" fill="none" stroke="#7a8aa8" stroke-width=".8"/><path d="M173 108h3M173 112.200h3" stroke="#7a8aa8" stroke-width=".9"/></g>
<path d="M14.800 128.200v8.800h-8.800z" fill="#d6d6d6"/>
<use href="#win" x="24.300" y="125"/>
<path d="M28.400 147.3l6.400 6.300-6.400 6.300z" fill="#d2d2d2"/>
<use href="#folder" x="45.900" y="145.7"/>
<path d="M28.400 168.3l6.400 6.300-6.400 6.300z" fill="#d2d2d2"/>
<use href="#folder" x="45.900" y="166.7"/>
<use href="#folder" x="45.900" y="187.7"/>
<use href="#folder" x="45.900" y="208.7"/>
<path d="M28.400 231.3l6.400 6.300-6.400 6.300z" fill="#d2d2d2"/>
<use href="#folder" x="45.900" y="229.7"/>
<path d="M28.400 252.3l6.400 6.300-6.400 6.300z" fill="#d2d2d2"/>
<use href="#folder" x="45.900" y="250.7"/>
<path d="M28.400 273.3l6.400 6.300-6.400 6.300z" fill="#d2d2d2"/>
<use href="#folder" x="45.900" y="271.7"/>
<path d="M28.400 294.3l6.400 6.300-6.400 6.300z" fill="#d2d2d2"/>
<use href="#folder" x="45.900" y="292.7"/>
<path d="M28.400 315.3l6.400 6.300-6.400 6.300z" fill="#d2d2d2"/>
<use href="#folder" x="45.900" y="313.7"/>
<use href="#file" x="46.200" y="335.3"/>
<use href="#file" x="46.200" y="356.3"/>
<use href="#file" x="46.200" y="377.3"/>
<path d="M1012.800 103.800v8.400h-8.600z" fill="#d6d6d6"/>
<g><path d="M1022.300 108.600l8-8.200 7.600 4.200v2.200l-8 8.800-7.600-4.600z" fill="#f4f2fc" stroke="#7c74c8" stroke-width=".8"/><path d="M1022.300 108.600l8-8.200 7.600 4.200-8 8.400z" fill="url(#bk)"/></g>
<use href="#doc" x="1044.300" y="122.5"/>
<use href="#doc" x="1044.300" y="143.5"/>
<use href="#doc" x="1044.300" y="164.5"/>
<use href="#doc" x="1044.300" y="185.5"/>
<use href="#doc" x="1044.300" y="206.5"/>
<use href="#doc" x="1044.300" y="227.5"/>
<use href="#doc" x="1044.300" y="248.5"/>
<use href="#doc" x="1044.300" y="269.5"/>
<use href="#doc" x="1044.300" y="290.5"/>
<use href="#doc" x="1044.300" y="311.5"/>
<use href="#doc" x="1044.300" y="332.5"/>
<use href="#doc" x="1044.300" y="353.5"/>
<use href="#doc" x="1044.300" y="374.5"/>
<use href="#doc" x="1044.300" y="395.5"/>
<use href="#doc" x="1044.300" y="416.5"/>
<use href="#doc" x="1044.300" y="437.5"/>
<use href="#doc" x="1044.300" y="458.5"/>
<use href="#doc" x="1044.300" y="479.5"/>
<use href="#dbi" x="448.200" y="276.2"/>
<use href="#cubeb" transform="translate(453.200 295.6) scale(.92)"/>
<use href="#cubeb" transform="translate(453.200 313.6) scale(.92)"/>
<use href="#dbi" x="448.200" y="330.2"/>
<use href="#dbi" x="448.200" y="348.2"/>
<use href="#dbi" x="448.200" y="366.2"/>
<use href="#cubep" transform="translate(454.200 385.3) scale(.92)"/>
<use href="#cubep" transform="translate(454.200 403.3) scale(.92)"/>
<use href="#cubep" transform="translate(454.200 421.3) scale(.92)"/>
<use href="#cubep" transform="translate(454.200 439.3) scale(.92)"/>
<use href="#cubep" transform="translate(454.200 457.3) scale(.92)"/>
<g fill="#4a4a48"><rect x="729" y="775" width="1" height="23"/><rect x="929" y="775" width="1" height="23"/><rect x="1008" y="775" width="1" height="23"/><rect x="1086" y="775" width="1" height="23"/><rect x="1141" y="775" width="1" height="23"/><rect x="1195" y="775" width="1" height="23"/><rect x="1250" y="775" width="1" height="23"/></g>
<rect x="735.200" y="777" width="159.600" height="19.500" rx="3.500" fill="#d4d0c8" stroke="#7e7e7c" stroke-width="1.800"/>
<rect x="901.500" y="776.500" width="21" height="20.500" rx="3" fill="#dcdcdc" stroke="#9a9a98" stroke-width=".8"/>
</svg>
<!-- TEXT LAYER -->
<div id="txt">
<div class="t" style="left:23.40px;top:4.00px;font-size:12.5px;letter-spacing:-0.982px;color:#0a0a0a">CakePHP</div>
<div class="t" style="left:75.90px;top:4.00px;font-size:12.5px;color:#0a0a0a">-</div>
<div class="t" style="left:83.80px;top:4.00px;font-size:12.5px;letter-spacing:-0.202px;color:#0a0a0a">C:\Web\CakePHP\CakePHP\src\Controller\ArticlesController.php</div>
<div class="t" style="left:8.00px;top:28.00px;font-size:13px;letter-spacing:-0.584px">File</div>
<div class="t" style="left:43.40px;top:28.00px;font-size:13px;letter-spacing:-0.069px">Edit</div>
<div class="t" style="left:81.40px;top:28.00px;font-size:13px;letter-spacing:-0.481px">Search</div>
<div class="t" style="left:136.20px;top:28.00px;font-size:13px;letter-spacing:-0.184px">View</div>
<div class="t" style="left:179.40px;top:28.00px;font-size:13px;letter-spacing:0.122px">Debug</div>
<div class="t" style="left:234.00px;top:28.00px;font-size:13px;letter-spacing:0.064px">Project</div>
<div class="t" style="left:290.00px;top:28.00px;font-size:13px;letter-spacing:-0.257px">Plugins</div>
<div class="t" style="left:347.00px;top:28.00px;font-size:13px;letter-spacing:0.310px">Tools</div>
<div class="t" style="left:394.25px;top:28.00px;font-size:13px;letter-spacing:0.058px">Windows</div>
<div class="t" style="left:463.25px;top:28.00px;font-size:13px;letter-spacing:0.033px">Help</div>
<div class="t" style="left:14.20px;top:77.00px;font-size:13px;letter-spacing:0.039px">Project</div>
<div class="t" style="left:1012.00px;top:77.00px;font-size:13px;letter-spacing:-0.357px">Dynamic Help</div>
<div class="t" style="left:268.50px;top:78.00px;font-size:13px;letter-spacing:-0.046px">ArticlesController.php</div>
<div class="t" style="left:419.75px;top:78.00px;font-size:13px;letter-spacing:-0.040px">default.ctp</div>
<div class="t" style="left:295.60px;top:730.00px;font-size:13px;letter-spacing:-0.793px">Code</div>
<div class="t" style="left:372.20px;top:730.00px;font-size:13px;letter-spacing:-0.142px">Preview</div>
<div class="t" style="left:46.40px;top:127.00px;font-size:12.2px;letter-spacing:-0.436px">CakePHP</div>
<div class="t" style="left:66.30px;top:148.00px;font-size:13px;letter-spacing:0.370px">bin</div>
<div class="t" style="left:66.30px;top:169.00px;font-size:13px;letter-spacing:0.299px">config</div>
<div class="t" style="left:66.30px;top:190.00px;font-size:13px;letter-spacing:0.414px">logs</div>
<div class="t" style="left:66.30px;top:211.00px;font-size:13px;letter-spacing:0.166px">plugins</div>
<div class="t" style="left:66.30px;top:232.00px;font-size:13px;letter-spacing:0.028px">src</div>
<div class="t" style="left:66.30px;top:253.00px;font-size:13px;letter-spacing:-0.092px">tests</div>
<div class="t" style="left:66.30px;top:274.00px;font-size:13px;letter-spacing:0.614px">tmp</div>
<div class="t" style="left:66.30px;top:295.00px;font-size:13px;letter-spacing:0.310px">vendor</div>
<div class="t" style="left:66.30px;top:316.00px;font-size:13px;letter-spacing:0.525px">webroot</div>
<div class="t" style="left:66.30px;top:337.00px;font-size:13px;letter-spacing:-0.365px">.htaccess</div>
<div class="t" style="left:66.30px;top:358.00px;font-size:13px;letter-spacing:-0.120px">.travis.yml</div>
<div class="t" style="left:66.30px;top:379.00px;font-size:13px;letter-spacing:0.051px">index.php</div>
<div class="t rt" style="left:1044.30px;top:102.00px;font-size:13px;letter-spacing:0.017px">Help</div>
<div class="t rt" style="left:1064.20px;top:123.00px;font-size:13px;letter-spacing:-0.425px;word-spacing:1.398px">EvChild::set method : PHP</div>
<div class="t rt" style="left:1064.20px;top:144.00px;font-size:13px;letter-spacing:-0.376px;word-spacing:1.186px">EvEmbed::set method : PHP</div>
<div class="t rt" style="left:1064.20px;top:165.00px;font-size:13px;letter-spacing:-0.479px;word-spacing:1.627px">Event::set method : PHP</div>
<div class="t rt" style="left:1064.20px;top:186.00px;font-size:13px;letter-spacing:-0.497px;word-spacing:1.706px">EvIo::set method : PHP</div>
<div class="t rt" style="left:1064.20px;top:207.00px;font-size:13px;letter-spacing:-0.293px;word-spacing:0.821px">EvPeriodic::set method : PHP</div>
<div class="t rt" style="left:1064.20px;top:228.00px;font-size:13px;letter-spacing:-0.423px;word-spacing:1.384px">EvSignal::set method : PHP</div>
<div class="t rt" style="left:1064.20px;top:249.00px;font-size:13px;letter-spacing:-0.527px;word-spacing:1.842px">EvStat::set method : PHP</div>
<div class="t rt" style="left:1064.20px;top:270.00px;font-size:13px;letter-spacing:-0.353px;word-spacing:1.086px">EvTimer::set method : PHP</div>
<div class="t rt" style="left:1064.20px;top:291.00px;font-size:13px;letter-spacing:-0.167px;word-spacing:0.280px">IntlCalendar::set method : PHP</div>
<div class="t rt" style="left:1064.20px;top:312.00px;font-size:13px;letter-spacing:-0.213px;word-spacing:0.479px">Memcache::set method : PHP</div>
<div class="t rt" style="left:1064.20px;top:333.00px;font-size:13px;letter-spacing:-0.113px;word-spacing:0.043px">Memcached::set method : PHP</div>
<div class="t rt" style="left:1064.20px;top:354.00px;font-size:13px;letter-spacing:-0.303px;word-spacing:0.868px">QuickHashIntHash::set method : PHP</div>
<div class="t rt" style="left:1064.20px;top:375.00px;font-size:13px;letter-spacing:-0.223px;word-spacing:0.519px">QuickHashIntStringHash::set method : PHP</div>
<div class="t rt" style="left:1064.20px;top:396.00px;font-size:13px;letter-spacing:-0.223px;word-spacing:0.519px">QuickHashStringIntHash::set method : PHP</div>
<div class="t rt" style="left:1064.20px;top:417.00px;font-size:13px;letter-spacing:-0.391px;word-spacing:1.244px">SNMP::set method : PHP</div>
<div class="t rt" style="left:1064.20px;top:438.00px;font-size:13px;letter-spacing:-0.270px;word-spacing:0.728px">SolrParams::set method : PHP</div>
<div class="t rt" style="left:1064.20px;top:459.00px;font-size:13px;letter-spacing:-0.306px;word-spacing:0.883px">Yaf_Config_Abstract::set method : PHP</div>
<div class="t rt" style="left:1064.20px;top:480.00px;font-size:13px;letter-spacing:-0.377px;word-spacing:1.190px">Yaf_Registry::set method : PHP</div>
<div class="t" style="left:3.50px;top:729.00px;font-size:13px;letter-spacing:-0.019px">Structure</div>
<div class="t" style="left:61.75px;top:729.00px;font-size:13px;letter-spacing:-0.246px">Class View</div>
<div class="t" style="left:128.25px;top:731.00px;font-size:13px;letter-spacing:-0.020px">Project</div>
<div class="t" style="left:173.25px;top:729.00px;font-size:13px;letter-spacing:-0.153px">Explorer</div>
<div class="t" style="left:1001.25px;top:729.00px;font-size:13px;letter-spacing:0.009px">Index</div>
<div class="t" style="left:1037.50px;top:731.00px;font-size:13px;letter-spacing:-0.438px">Dynamic Help</div>
<div class="t" style="left:1119.25px;top:729.00px;font-size:13px;letter-spacing:-0.100px">Properties</div>
<div class="t" style="left:1182.50px;top:729.00px;font-size:13px;letter-spacing:-0.473px">Map</div>
<div class="t" style="left:10.00px;top:755.00px;font-size:13px;letter-spacing:-0.909px">TODO</div>
<div class="t" style="left:64.50px;top:755.00px;font-size:13px;letter-spacing:-0.192px">Search Result</div>
<div class="t" style="left:163.25px;top:755.00px;font-size:13px;letter-spacing:-0.187px">Call Stack</div>
<div class="t" style="left:239.25px;top:755.00px;font-size:13px;letter-spacing:-0.396px">Locals</div>
<div class="t" style="left:294.25px;top:755.00px;font-size:13px;letter-spacing:-0.127px">Watch</div>
<div class="t" style="left:350.00px;top:755.00px;font-size:13px;letter-spacing:-0.036px">Output</div>
<div class="t" style="left:408.00px;top:755.00px;font-size:13px;letter-spacing:-0.241px">Bookmarks</div>
<div class="t" style="left:490.00px;top:755.00px;font-size:13px;letter-spacing:0.142px">Errors</div>
<div class="t" style="left:2.50px;top:781.00px;font-size:13px;letter-spacing:-0.370px">Ready</div>
<div class="t" style="left:934.50px;top:781.00px;font-size:13px;letter-spacing:-0.811px">UTF-8</div>
<div class="t" style="left:1013.25px;top:781.00px;font-size:13px;letter-spacing:0.017px">Windows</div>
<div class="t" style="left:1095.00px;top:781.00px;font-size:13px;letter-spacing:-0.317px">Ln: 11</div>
<div class="t" style="left:1150.50px;top:781.00px;font-size:13px;letter-spacing:-0.267px">Col: 16</div>
<div class="t" style="left:1204.50px;top:781.00px;font-size:13px;letter-spacing:-0.542px">Ch: 16</div>
<div class="t" style="left:1255.50px;top:781.00px;font-size:13px;letter-spacing:-1.036px">INS</div>
<div class="t pp" style="left:465.70px;top:276.00px;font-size:13px;letter-spacing:-0.358px">RequestHandler</div>
<div class="t pp" style="left:465.70px;top:294.00px;font-size:13px;letter-spacing:-0.298px">response</div>
<div class="t pp" style="left:465.70px;top:312.00px;font-size:13px;letter-spacing:0.136px">router</div>
<div class="t pp" style="left:465.70px;top:330.00px;font-size:13px;letter-spacing:-0.133px">scaffold</div>
<div class="t pp" style="left:465.70px;top:348.00px;font-size:13px;letter-spacing:-0.153px">Security</div>
<div class="t pp" style="left:465.70px;top:366.00px;font-size:13px;letter-spacing:-0.425px">Session</div>
<div class="t pp" style="left:465.70px;top:384.00px;font-size:13px;letter-spacing:-0.222px;color:#fff">set</div>
<div class="t pp" style="left:465.70px;top:402.00px;font-size:13px;letter-spacing:-0.198px">setAction</div>
<div class="t pp" style="left:465.70px;top:420.00px;font-size:13px;letter-spacing:-0.318px">setRequest</div>
<div class="t pp" style="left:465.70px;top:438.00px;font-size:13px;letter-spacing:-0.252px">shutdownProcess</div>
<div class="t pp" style="left:465.70px;top:456.00px;font-size:13px;letter-spacing:-0.216px">startupProcess</div>
<div class="t lnn" style="left:295.20px;top:99.00px;font-size:12px;color:#1f7a7a;font-family:'Liberation Mono',monospace">1</div>
<div class="t lnn" style="left:295.20px;top:115.00px;font-size:12px;color:#1f7a7a;font-family:'Liberation Mono',monospace">2</div>
<div class="t lnn" style="left:295.20px;top:131.00px;font-size:12px;color:#1f7a7a;font-family:'Liberation Mono',monospace">3</div>
<div class="t lnn" style="left:295.20px;top:147.00px;font-size:12px;color:#1f7a7a;font-family:'Liberation Mono',monospace">4</div>
<div class="t lnn" style="left:295.20px;top:163.00px;font-size:12px;color:#1f7a7a;font-family:'Liberation Mono',monospace">5</div>
<div class="t lnn" style="left:295.20px;top:179.00px;font-size:12px;color:#1f7a7a;font-family:'Liberation Mono',monospace">6</div>
<div class="t lnn" style="left:295.20px;top:195.00px;font-size:12px;color:#1f7a7a;font-family:'Liberation Mono',monospace">7</div>
<div class="t lnn" style="left:295.20px;top:211.00px;font-size:12px;color:#1f7a7a;font-family:'Liberation Mono',monospace">8</div>
<div class="t lnn" style="left:295.20px;top:227.00px;font-size:12px;color:#1f7a7a;font-family:'Liberation Mono',monospace">9</div>
<div class="t lnn" style="left:286.70px;top:243.00px;font-size:12px;letter-spacing:1.494px;color:#1f7a7a;font-family:'Liberation Mono',monospace">10</div>
<div class="t lnn" style="left:286.70px;top:259.00px;font-size:12px;letter-spacing:1.494px;color:#1f7a7a;font-family:'Liberation Mono',monospace">11</div>
<div class="t lnn" style="left:286.70px;top:275.00px;font-size:12px;letter-spacing:1.494px;color:#1f7a7a;font-family:'Liberation Mono',monospace">12</div>
<div class="t lnn" style="left:286.70px;top:291.00px;font-size:12px;letter-spacing:1.494px;color:#1f7a7a;font-family:'Liberation Mono',monospace">13</div>
<div class="t lnn" style="left:286.70px;top:307.00px;font-size:12px;letter-spacing:1.494px;color:#1f7a7a;font-family:'Liberation Mono',monospace">14</div>
<div class="t lnn" style="left:286.70px;top:323.00px;font-size:12px;letter-spacing:1.494px;color:#1f7a7a;font-family:'Liberation Mono',monospace">15</div>
<div class="t lnn" style="left:286.70px;top:339.00px;font-size:12px;letter-spacing:1.494px;color:#1f7a7a;font-family:'Liberation Mono',monospace">16</div>
<div class="t lnn" style="left:286.70px;top:355.00px;font-size:12px;letter-spacing:1.494px;color:#1f7a7a;font-family:'Liberation Mono',monospace">17</div>
<div class="t lnn" style="left:286.70px;top:371.00px;font-size:12px;letter-spacing:1.494px;color:#1f7a7a;font-family:'Liberation Mono',monospace">18</div>
<div class="t lnn" style="left:286.70px;top:387.00px;font-size:12px;letter-spacing:1.494px;color:#1f7a7a;font-family:'Liberation Mono',monospace">19</div>
</div>
<!-- MOUSE CURSOR -->
<svg width="1280" height="800" viewBox="0 0 1280 800" style="pointer-events:none"><path d="M659.5 391.5v16.2l3.7-3.6 2.6 6 2.4-1-2.6-5.9h5.2z" fill="#fff" stroke="#000" stroke-width="1.300" stroke-linejoin="miter"/></svg>
</body>
</html>
